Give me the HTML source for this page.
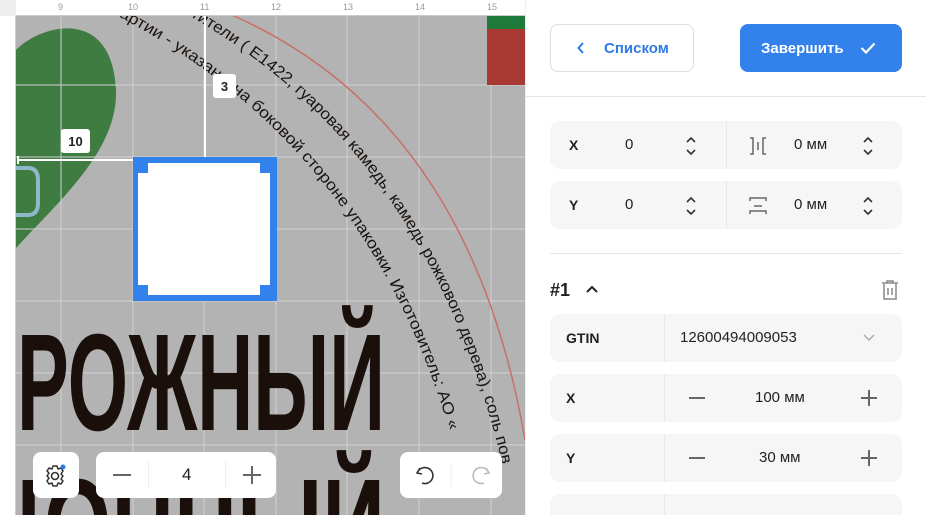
<!DOCTYPE html>
<html><head><meta charset="utf-8"><style>
*{box-sizing:border-box;margin:0;padding:0}
html,body{width:926px;height:515px;overflow:hidden}
body{position:relative;font-family:"Liberation Sans","DejaVu Sans",sans-serif;background:#fff}
.abs{position:absolute}
.panel{left:525px;top:0;width:401px;height:515px;background:#fff;border-left:1px solid #eee;overflow:hidden}
.btn{position:absolute;border-radius:8px;font-size:15px;font-weight:bold;display:flex;align-items:center}
.row{position:absolute;left:24px;width:352px;height:48px;background:#f6f6f6;border-radius:10px}
.lbl{position:absolute;font-size:14px;font-weight:bold;color:#222;top:16px}
.val{position:absolute;font-size:15px;color:#222;top:15px}
.div{position:absolute;top:0;width:1px;height:48px;background:#e8e8e8}
.ctl{position:absolute;background:#fff;border-radius:8px}
.ud{position:absolute;top:15px}
</style></head><body>
<div class="abs" style="left:0;top:0;width:525px;height:515px;background:#b3b3b3;overflow:hidden">
<svg width="525" height="515" style="position:absolute;left:0;top:0">
 <path d="M16 50 C40 25 112 5 116 90 C118 150 60 200 16 248 Z" fill="#3f7c42"/>
 <path d="M16 168 H28 Q38 168 38 180 V203 Q38 215 28 215 H16" fill="none" stroke="#8fb8c8" stroke-width="4"/>
 <g stroke="#d0d0d0" stroke-width="1">
  <line x1="61" y1="16" x2="61" y2="515"/><line x1="133" y1="16" x2="133" y2="515"/><line x1="204" y1="16" x2="204" y2="515"/><line x1="276" y1="16" x2="276" y2="515"/><line x1="347" y1="16" x2="347" y2="515"/><line x1="419" y1="16" x2="419" y2="515"/><line x1="491" y1="16" x2="491" y2="515"/>
  <line x1="16" y1="85" x2="525" y2="85"/><line x1="16" y1="157" x2="525" y2="157"/><line x1="16" y1="229" x2="525" y2="229"/><line x1="16" y1="301" x2="525" y2="301"/><line x1="16" y1="373" x2="525" y2="373"/><line x1="16" y1="445" x2="525" y2="445"/>
 </g>
 <rect x="487" y="16" width="38" height="13" fill="#1e7a3a"/><rect x="487" y="29" width="38" height="56" fill="#a83a33"/>
 <path d="M232 15 Q470 120 525 440" fill="none" stroke="#c77068" stroke-width="1.5"/>
 <defs><path id="arc" d="M110 12 Q400 160 470 515"/><path id="arc2" d="M175 8 Q440 150 510 500"/></defs>
 <text font-family="Liberation Sans Narrow,Liberation Sans,sans-serif" font-size="16" fill="#1a1410"><textPath href="#arc" textLength="555" lengthAdjust="spacingAndGlyphs">партии - указаны на боковой стороне упаковки. Изготовитель: АО «</textPath></text>
 <text font-family="Liberation Sans Narrow,Liberation Sans,sans-serif" font-size="16" fill="#1a1410"><textPath href="#arc2" textLength="580" lengthAdjust="spacingAndGlyphs">устители ( E1422, гуаровая камедь, камедь рожкового дерева), соль пов</textPath></text>
 <text x="17" y="430" font-family="Liberation Sans Narrow,Liberation Sans,sans-serif" font-weight="bold" font-size="138" fill="#1a0f0a" textLength="368" lengthAdjust="spacingAndGlyphs">РОЖНЫЙ</text>
 <text x="-20" y="575" font-family="Liberation Sans Narrow,Liberation Sans,sans-serif" font-weight="bold" font-size="138" fill="#1a0f0a" textLength="405" lengthAdjust="spacingAndGlyphs">ЦОПНЫЙ</text>
 <line x1="205" y1="16" x2="205" y2="157" stroke="#fff" stroke-width="2"/>
 <line x1="18" y1="160" x2="133" y2="160" stroke="#fff" stroke-width="2"/>
 <line x1="18" y1="156" x2="18" y2="164" stroke="#fff" stroke-width="2"/>
 <rect x="133" y="157" width="144" height="144" fill="#3381ea"/>
 <rect x="138" y="163" width="132" height="132" fill="#fff"/>
 <rect x="138" y="163" width="10" height="10" fill="#3381ea"/><rect x="260" y="163" width="10" height="10" fill="#3381ea"/>
 <rect x="138" y="285" width="10" height="10" fill="#3381ea"/><rect x="260" y="285" width="10" height="10" fill="#3381ea"/>
 <rect x="61" y="129" width="29" height="24" rx="3" fill="#fff"/><text x="75.5" y="146" text-anchor="middle" font-size="13" font-weight="bold" fill="#222">10</text>
 <rect x="213" y="74" width="23" height="24" rx="3" fill="#fff"/><text x="224.5" y="91" text-anchor="middle" font-size="13" font-weight="bold" fill="#222">3</text>
</svg>
<div class="abs" style="left:0;top:0;width:525px;height:16px;background:#fff;border-bottom:1px solid #ccc;font-size:9px;color:#999">
 <span class="abs" style="left:58px;top:2px">9</span><span class="abs" style="left:128px;top:2px">10</span><span class="abs" style="left:200px;top:2px">11</span><span class="abs" style="left:271px;top:2px">12</span><span class="abs" style="left:343px;top:2px">13</span><span class="abs" style="left:415px;top:2px">14</span><span class="abs" style="left:487px;top:2px">15</span>
</div>
<div class="abs" style="left:0;top:0;width:16px;height:515px;background:#fff;border-right:1px solid #ccc"></div>
<div class="abs" style="left:0;top:0;width:16px;height:16px;background:#eee"></div>
<div class="ctl" style="left:33px;top:452px;width:46px;height:46px">
 <svg width="46" height="46"><circle cx="22" cy="24" r="3.5" fill="none" stroke="#333" stroke-width="1.6"/><path d="M20 14 H24 L25 17 L28 16 L30 19 L28 22 L30 24 L28 27 L30 29 L28 32 L25 31 L24 34 H20 L19 31 L16 32 L14 29 L16 26 L14 24 L16 21 L14 19 L16 16 L19 17 Z" fill="none" stroke="#333" stroke-width="1.5" stroke-linejoin="round"/><circle cx="30" cy="15" r="2.5" fill="#2f7be5"/></svg>
</div>
<div class="ctl" style="left:96px;top:452px;width:180px;height:46px">
 <div class="abs" style="left:17px;top:22px;width:18px;height:2px;background:#666"></div>
 <div class="abs" style="left:52px;top:10px;width:1px;height:26px;background:#eee"></div>
 <div class="abs" style="left:86px;top:13px;font-size:17px;color:#222">4</div>
 <div class="abs" style="left:129px;top:10px;width:1px;height:26px;background:#eee"></div>
 <div class="abs" style="left:147px;top:22px;width:18px;height:2px;background:#666"></div>
 <div class="abs" style="left:155px;top:14px;width:2px;height:18px;background:#666"></div>
</div>
<div class="ctl" style="left:400px;top:452px;width:102px;height:46px">
 <svg width="102" height="46"><path d="M20 16 L17 21 L22 22 M17.5 20.5 A8 8 0 1 1 22 31" fill="none" stroke="#333" stroke-width="1.6"/><line x1="51" y1="11" x2="51" y2="35" stroke="#eee"/><path d="M86 16 L89 21 L84 22 M88.5 20.5 A8 8 0 1 0 84 31" fill="none" stroke="#bbb" stroke-width="1.6"/></svg>
</div>
</div>
<div class="abs panel">
 <div class="btn" style="left:24px;top:24px;width:144px;height:48px;border:1px solid #ddd;color:#2f7be5"><svg style="margin-left:26px" width="8" height="12"><path d="M6 1 L1.5 6 L6 11" fill="none" stroke="#2f7be5" stroke-width="2"/></svg><span style="margin-left:19px">Списком</span></div>
 <div class="btn" style="left:214px;top:24px;width:162px;height:48px;background:#3381ea;color:#fff"><span style="margin-left:21px">Завершить</span><svg style="margin-left:16px" width="16" height="12"><path d="M1.5 6 L6 10.5 L14.5 1.5" fill="none" stroke="#fff" stroke-width="2.2"/></svg></div>
 <div class="abs" style="left:0;top:96px;width:401px;height:1px;background:#e6e6e6"></div>
 <div class="row" style="top:121px"><span class="lbl" style="left:19px">X</span><span class="val" style="left:75px">0</span><svg class="ud" style="left:134px" width="14" height="20"><path d="M3 6 L7 2 L11 6 M3 14 L7 18 L11 14" fill="none" stroke="#333" stroke-width="1.6"/></svg><div class="div" style="left:176px"></div><svg class="ud" style="left:198px" width="20" height="20"><path d="M2 2 H5 V18 H2 M18 2 H15 V18 H18 M10 6 V14" fill="none" stroke="#666" stroke-width="1.5"/></svg><span class="val" style="left:244px">0 мм</span><svg class="ud" style="left:311px" width="14" height="20"><path d="M3 6 L7 2 L11 6 M3 14 L7 18 L11 14" fill="none" stroke="#333" stroke-width="1.6"/></svg></div>
 <div class="row" style="top:181px"><span class="lbl" style="left:19px">Y</span><span class="val" style="left:75px">0</span><svg class="ud" style="left:134px" width="14" height="20"><path d="M3 6 L7 2 L11 6 M3 14 L7 18 L11 14" fill="none" stroke="#333" stroke-width="1.6"/></svg><div class="div" style="left:176px"></div><svg class="ud" style="left:198px" width="20" height="20"><path d="M2 5 V2 H18 V5 M2 18 V15 H18 V18 M6 10 H14" fill="none" stroke="#666" stroke-width="1.5"/></svg><span class="val" style="left:244px">0 мм</span><svg class="ud" style="left:311px" width="14" height="20"><path d="M3 6 L7 2 L11 6 M3 14 L7 18 L11 14" fill="none" stroke="#333" stroke-width="1.6"/></svg></div>
 <div class="abs" style="left:24px;top:253px;width:352px;height:1px;background:#e6e6e6"></div>
 <div class="abs" style="left:24px;top:280px;font-size:18px;font-weight:bold;color:#222">#1</div>
 <svg class="abs" style="left:59px;top:285px" width="14" height="10"><path d="M2 7 L7 2 L12 7" fill="none" stroke="#222" stroke-width="2"/></svg>
 <svg class="abs" style="left:354px;top:279px" width="20" height="22"><path d="M2 4 H18 M7 4 V2 H13 V4 M4 5 V20 H16 V5 M8 9 V16 M12 9 V16" fill="none" stroke="#888" stroke-width="1.5"/></svg>
 <div class="row" style="top:314px"><span class="lbl" style="left:16px">GTIN</span><div class="div" style="left:114px"></div><span class="val" style="left:130px">12600494009053</span><svg class="ud" style="left:312px;top:19px" width="14" height="10"><path d="M2 2 L7 7 L12 2" fill="none" stroke="#aaa" stroke-width="1.5"/></svg></div>
 <div class="row" style="top:374px"><span class="lbl" style="left:16px">X</span><div class="div" style="left:114px"></div><div class="abs" style="left:139px;top:23px;width:16px;height:2px;background:#666"></div><span class="val" style="left:205px">100 мм</span><div class="abs" style="left:311px;top:23px;width:16px;height:2px;background:#666"></div><div class="abs" style="left:318px;top:16px;width:2px;height:16px;background:#666"></div></div>
 <div class="row" style="top:434px"><span class="lbl" style="left:16px">Y</span><div class="div" style="left:114px"></div><div class="abs" style="left:139px;top:23px;width:16px;height:2px;background:#666"></div><span class="val" style="left:209px">30 мм</span><div class="abs" style="left:311px;top:23px;width:16px;height:2px;background:#666"></div><div class="abs" style="left:318px;top:16px;width:2px;height:16px;background:#666"></div></div>
 <div class="row" style="top:494px;height:21px;border-radius:10px 10px 0 0"><div class="div" style="left:114px;height:21px"></div></div>
</div>
</body></html>
